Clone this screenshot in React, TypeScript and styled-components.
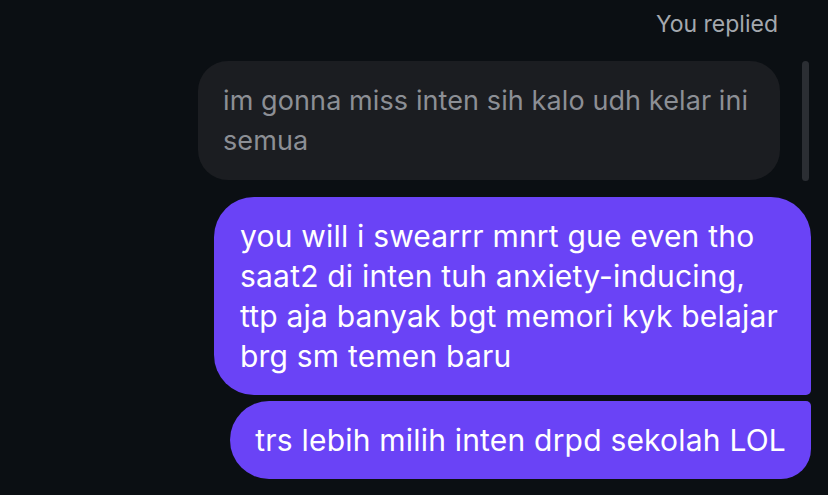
import React from 'react';
import styled, { createGlobalStyle } from 'styled-components';

const GlobalStyle = createGlobalStyle`
  html, body {
    margin: 0;
    padding: 0;
    background: #0b0f13;
  }
  body {
    font-family: Inter, 'Noto Sans', 'Liberation Sans', sans-serif;
    -webkit-font-smoothing: antialiased;
  }
`;

// lines kept as they wrap in the chat
const messages = [
  {
    id: 'm1',
    text: 'you will i swearrr mnrt gue even tho\nsaat2 di inten tuh anxiety-inducing,\nttp aja banyak bgt memori kyk belajar\nbrg sm temen baru',
    first: true,
  },
  {
    id: 'm2',
    text: 'trs lebih milih inten drpd sekolah LOL',
    first: false,
  },
];

export default function App() {
  return (
    <>
      <GlobalStyle />
      <Page>
        <ReplyLabel>You replied</ReplyLabel>
        <ReplyRow>
          <ReplyBubble>im gonna miss inten sih kalo udh kelar ini semua</ReplyBubble>
          <ScrollThumb />
        </ReplyRow>
        <Thread>
          {messages.map((m) => (
            <Bubble key={m.id} $first={m.first}>
              {m.text}
            </Bubble>
          ))}
        </Thread>
      </Page>
    </>
  );
}

const Page = styled.div`
  width: 828px;
  height: 495px;
  overflow: hidden;
  display: flex;
  flex-direction: column;
  align-items: flex-end;
  background: #0b0f13;
  padding-top: 10px;
  box-sizing: border-box;
`;

const ReplyLabel = styled.div`
  margin-right: 50px;
  font-size: 23px;
  line-height: 28px;
  color: #a4a8ae;
`;

const ReplyRow = styled.div`
  position: relative;
  width: 100%;
  display: flex;
  justify-content: flex-end;
  margin-top: 23px;
`;

const ReplyBubble = styled.div`
  width: 582px;
  box-sizing: border-box;
  margin-right: 48px;
  padding: 20px 20px 19px 25px;
  border-radius: 30px;
  background: #1b1d21;
  color: #8c8f95;
  font-size: 27px;
  line-height: 40px;
  letter-spacing: 0.1px;
`;

const ScrollThumb = styled.div`
  position: absolute;
  right: 19px;
  top: 0;
  width: 7px;
  height: 120px;
  border-radius: 4px;
  background: #2b2e33;
`;

const Thread = styled.div`
  display: flex;
  flex-direction: column;
  align-items: flex-end;
  gap: 6px;
  margin-top: 17px;
  margin-right: 17px;
`;

const Bubble = styled.div<{ $first: boolean }>`
  box-sizing: border-box;
  width: ${(p) => (p.$first ? '597px' : 'auto')};
  padding: ${(p) => (p.$first ? '19px 16px 19px 26px' : '19px 25px 19px 25px')};
  border-radius: ${(p) => (p.$first ? '40px 40px 5px 40px' : '39px 5px 30px 39px')};
  background: #6a43f6;
  color: #ffffff;
  font-size: 30px;
  line-height: 40px;
  letter-spacing: 0.2px;
  white-space: pre-line;
`;
